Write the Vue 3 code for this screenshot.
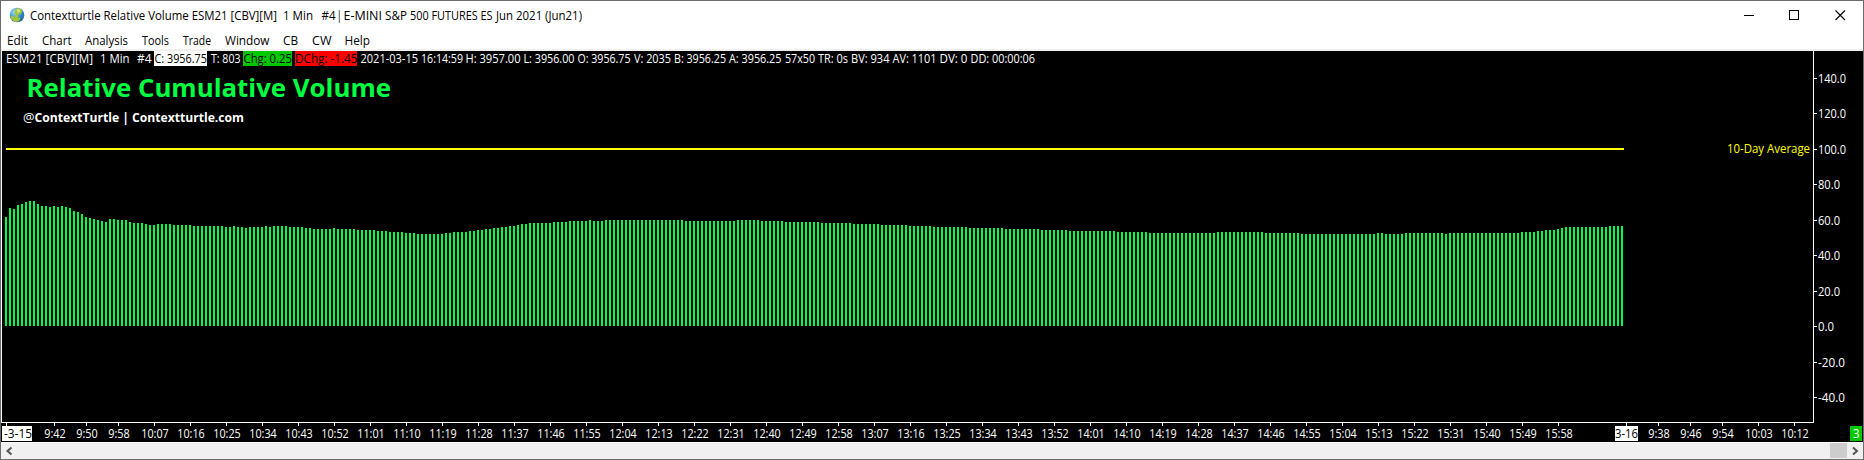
<script setup>
// Each run is [number of bars, top edge]; bars are spaced 4px apart.
const runs = [
  [1,217],[1,208],[1,209],[1,205],[1,204],[1,202],[2,201],[1,204],[2,206],[1,207],[1,206],[1,207],[1,206],[1,207],
  [1,208],[1,211],[1,212],[1,214],[1,217],[1,218],[1,219],[1,220],[1,221],[1,222],[2,219],[3,220],[1,222],[3,223],
  [1,224],[2,225],[4,224],[5,225],[8,226],[2,227],[1,226],[2,227],[1,228],[4,227],[1,226],[1,227],[4,226],[4,227],
  [2,228],[5,229],[1,228],[5,229],[5,230],[3,231],[4,232],[3,233],[7,234],[2,233],[4,232],[2,231],[2,230],[2,229],
  [2,228],[2,227],[2,226],[1,225],[2,224],[6,223],[4,222],[5,221],[1,220],[3,221],[20,220],[13,221],[6,220],[6,221],
  [9,222],[8,223],[7,224],[7,225],[6,226],[9,227],[9,228],[9,229],[7,230],[12,231],[8,232],[17,233],[12,232],
  [9,233],[19,234],[2,233],[5,234],[10,233],[1,234],[18,233],[4,232],[2,231],[3,230],[1,229],[1,228],[11,227],[4,226],
]
const bars = runs.flatMap(([n, top]) => Array(n).fill(top)).map((top, i) => ({ x: 5 + i * 4, top }))

const levels = [
  ['140.0', 78, 27], ['120.0', 113, 27], ['100.0', 149, 27], ['80.0', 184, 21], ['60.0', 220, 21],
  ['40.0', 255, 21], ['20.0', 291, 21], ['0.0', 326, 15], ['-20.0', 362, 26], ['-40.0', 397, 26],
]

const clock = (m) => `${Math.floor(m / 60)}:${String(m % 60).padStart(2, '0')}`
const times = [
  ['9:42', 54], ['9:50', 86], ['9:58', 118],
  ...Array.from({ length: 40 }, (_, i) => [clock(607 + i * 9), 154 + i * 36]),
  ['9:38', 1658], ['9:46', 1690], ['9:54', 1722], ['10:03', 1758], ['10:12', 1794],
]
const ticks = [6, 1626, ...times.map((t) => t[1])]

// [text, left, right]
const title = [
  ['Contextturtle Relative Volume ESM21 [CBV][M]', 30, 277], ['1 Min', 283, 313], ['#4', 321.5, 335.5],
  ['|', 336.5, 342], ['E-MINI', 343.5, 382], ['S&P', 385, 407], ['500 FUTURES ES', 410, 492.5], ['Jun 2021 (Jun21)', 496, 582],
]
const menu = [
  ['Edit', 7, 28], ['Chart', 42, 71.5], ['Analysis', 85, 128], ['Tools', 142, 169], ['Trade', 183, 211],
  ['Window', 225, 269.5], ['CB', 283, 298], ['CW', 312, 331.5], ['Help', 344.5, 370],
]
const quote = [
  ['ESM21 [CBV][M]', 6, 93], ['1 Min', 100, 129.5], ['#4', 137, 151.5], ['C: 3956.75', 154.5, 207, 'dark'],
  ['T: 803', 211, 240.5], ['Chg: 0.25', 243.5, 292, 'dark'], ['DChg: -1.45', 295, 357.5, 'dark'],
  ['2021-03-15', 360.5, 418], ['16:14:59', 421, 463], ['H: 3957.00', 465.5, 520.5], ['L: 3956.00', 523.5, 574.5],
  ['O: 3956.75', 577.5, 630.5], ['V: 2035', 634, 671], ['B: 3956.25', 674, 726], ['A: 3956.25', 729, 781.5],
  ['57x50', 785, 815], ['TR: 0s', 818, 848], ['BV: 934', 851, 889.5], ['AV: 1101', 892.5, 936.5],
  ['DV: 0', 939.5, 967.5], ['DD: 00:00:06', 970.5, 1035],
]
</script>

<template>
  <div class="window">
    <header class="titlebar">
      <svg class="globe" width="16" height="16" viewBox="0 0 16 16">
        <defs>
          <radialGradient id="sea" cx="35%" cy="30%" r="75%">
            <stop offset="0" stop-color="#a9ddf2" />
            <stop offset=".5" stop-color="#4a9fd0" />
            <stop offset="1" stop-color="#145a98" />
          </radialGradient>
        </defs>
        <circle cx="8" cy="8" r="7.3" fill="url(#sea)" />
        <path d="M6.5 2 10 1 13 3.2 12.6 6 10 7.5 8.5 8 9 10.5 11.5 11 10 14.3 6.5 15 3 12.8 1.2 9.5 3.5 9 6 10.5 6.5 7 5.5 5Z" fill="#a4c639" />
        <path d="M7.5 2.5 10.5 2 11.5 4.5 8.5 6Z" fill="#d2e48a" />
        <path d="M12.5 7 14.8 6.5 14 11 12 10Z" fill="#2d7fb5" />
      </svg>
      <svg class="caption" width="600" height="28">
        <text v-for="t in title" :key="t[0]" :x="t[1] - 27" y="19" :textLength="t[2] - t[1]" lengthAdjust="spacingAndGlyphs">{{ t[0] }}</text>
      </svg>
      <svg class="controls" width="112" height="28" fill="none" stroke="#000" shape-rendering="crispEdges">
        <path d="M0 14.5H10M45.5 9.5H54.5V18.5H45.5Z" />
        <path d="M91.5 9.5 101 19M101 9.5 91.5 19" shape-rendering="auto" stroke-width="1.1" />
      </svg>
    </header>
    <nav class="menubar">
      <svg width="400" height="20">
        <text v-for="t in menu" :key="t[0]" :x="t[1] - 1" y="16" :textLength="t[2] - t[1]" lengthAdjust="spacingAndGlyphs">{{ t[0] }}</text>
      </svg>
    </nav>
    <main class="chart">
      <svg width="1862" height="391" viewBox="1 51 1862 391">
        <g shape-rendering="crispEdges">
          <path d="M1.5 51V422.5H1813.5V51" fill="none" stroke="#fff" />
          <rect v-for="b in bars" :key="b.x" :x="b.x" :y="b.top" width="2" :height="326 - b.top" fill="#00ff40" />
          <rect x="6" y="148" width="1618" height="2" fill="#ff0" />
          <rect v-for="l in levels" :key="l[0]" x="1814" :y="l[1]" width="3" height="1" fill="#fff" />
          <rect v-for="x in ticks" :key="x" :x="x" y="423" width="1" height="3" fill="#fff" />
          <rect x="154" y="51" width="53" height="15" fill="#fff" />
          <rect x="243" y="51" width="49" height="15" fill="#00c800" />
          <rect x="295" y="51" width="62" height="15" fill="#f00" />
          <rect x="2" y="426" width="30" height="15" fill="#fff" />
          <rect x="1615" y="426" width="23" height="15" fill="#fff" />
          <rect x="1850" y="426" width="12" height="15" fill="#00c800" />
        </g>
        <text v-for="t in quote" :key="t[0]" :class="t[3]" :x="t[1]" y="63" :textLength="t[2] - t[1]" lengthAdjust="spacingAndGlyphs">{{ t[0] }}</text>
        <text class="heading" x="26.5" y="97" textLength="364.5" lengthAdjust="spacingAndGlyphs">Relative Cumulative Volume</text>
        <text x="23" y="122" textLength="11.5" lengthAdjust="spacingAndGlyphs">@</text>
        <text class="bold" x="34.5" y="122" textLength="209.5" lengthAdjust="spacingAndGlyphs">ContextTurtle | Contextturtle.com</text>
        <text class="average" x="1727" y="153" textLength="83" lengthAdjust="spacingAndGlyphs">10-Day Average</text>
        <text v-for="l in levels" :key="l[0]" x="1818" :y="l[1] + 5" :textLength="l[2] + 1" lengthAdjust="spacingAndGlyphs">{{ l[0] }}</text>
        <text v-for="t in times" :key="t[1]" class="time" :x="t[1] + 1" y="438" :textLength="t[0].length > 4 ? 27.5 : 21.5" lengthAdjust="spacingAndGlyphs">{{ t[0] }}</text>
        <text class="dark" x="4" y="438" textLength="28" lengthAdjust="spacingAndGlyphs">-3-15</text>
        <text class="dark" x="1615" y="438" textLength="23" lengthAdjust="spacingAndGlyphs">3-16</text>
        <text x="1853" y="438" textLength="6.5" lengthAdjust="spacingAndGlyphs">3</text>
      </svg>
    </main>
    <footer class="scrollbar">
      <svg class="arrow" width="16" height="16"><path d="M10.5 4.5 6.5 8 10.5 11.5" /></svg>
      <div class="track"><div class="thumb"></div></div>
      <svg class="arrow" width="16" height="16"><path d="M6 4.5 10 8 6 11.5" /></svg>
    </footer>
  </div>
</template>

<style>
body { margin: 0; overflow: hidden; }
</style>

<style scoped>
.window {
  box-sizing: border-box;
  width: 1864px;
  height: 460px;
  border: 1px solid #6b6b6b;
  background: #fff;
  font: 12.4px "Open Sans", "Noto Sans", sans-serif;
}
svg { display: block; }
text { fill: #000; white-space: pre; }
.titlebar { display: flex; height: 28px; }
.globe { margin: 6px 2px 0 8px; }
.controls { margin-left: auto; margin-right: 7px; }
.menubar { height: 20px; border-bottom: 2px solid #f0f0f0; }
.chart { height: 391px; background: #000; }
.chart text { fill: #fff; }
.chart .dark { fill: #000; }
.chart .heading { fill: #00ff40; font-size: 25.2px; font-weight: 700; }
.chart .bold { font-weight: 700; }
.chart .average { fill: #ff0; }
.time { text-anchor: middle; }
.scrollbar {
  display: flex;
  box-sizing: border-box;
  height: 17px;
  border-top: 1px solid #fff;
  background: #f0f0f0;
}
.track { display: flex; flex: 1; justify-content: flex-end; }
.thumb { width: 17px; height: 15px; background: #cdcdcd; }
.arrow path { fill: none; stroke: #555; stroke-width: 2; }
</style>
